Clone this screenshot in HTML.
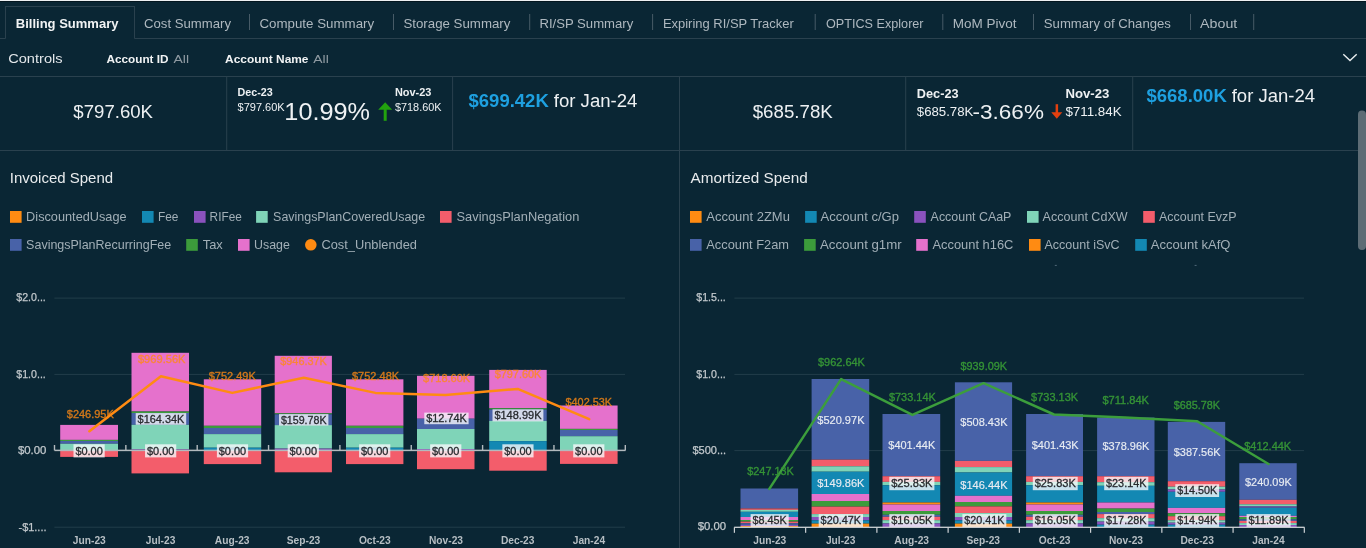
<!DOCTYPE html>
<html><head><meta charset="utf-8"><title>Billing Summary</title>
<style>
html,body{margin:0;padding:0;background:#0a2634;width:1366px;height:548px;overflow:hidden}
svg{display:block;font-family:"Liberation Sans", sans-serif;will-change:transform}
</style></head><body>
<svg width="1366" height="548" viewBox="0 0 1366 548">
<rect x="0.00" y="0.00" width="1366.00" height="1.00" fill="#eef0f2"/>
<rect x="0.00" y="1.00" width="1366.00" height="1.00" fill="#04161f"/>
<text x="15.81" y="28.00" font-size="13" fill="#f1f3f4" font-weight="bold" textLength="102.67" lengthAdjust="spacingAndGlyphs">Billing Summary</text>
<text x="144.01" y="28.00" font-size="13" fill="#aeb8bf" font-weight="normal" textLength="86.97" lengthAdjust="spacingAndGlyphs">Cost Summary</text>
<text x="259.42" y="28.00" font-size="13" fill="#aeb8bf" font-weight="normal" textLength="114.77" lengthAdjust="spacingAndGlyphs">Compute Summary</text>
<text x="403.42" y="28.00" font-size="13" fill="#aeb8bf" font-weight="normal" textLength="106.97" lengthAdjust="spacingAndGlyphs">Storage Summary</text>
<text x="539.41" y="28.00" font-size="13" fill="#aeb8bf" font-weight="normal" textLength="93.87" lengthAdjust="spacingAndGlyphs">RI/SP Summary</text>
<text x="662.91" y="28.00" font-size="13" fill="#aeb8bf" font-weight="normal" textLength="130.87" lengthAdjust="spacingAndGlyphs">Expiring RI/SP Tracker</text>
<text x="826.01" y="28.00" font-size="13" fill="#aeb8bf" font-weight="normal" textLength="97.57" lengthAdjust="spacingAndGlyphs">OPTICS Explorer</text>
<text x="952.71" y="28.00" font-size="13" fill="#aeb8bf" font-weight="normal" textLength="63.87" lengthAdjust="spacingAndGlyphs">MoM Pivot</text>
<text x="1043.82" y="28.00" font-size="13" fill="#aeb8bf" font-weight="normal" textLength="127.07" lengthAdjust="spacingAndGlyphs">Summary of Changes</text>
<text x="1200.12" y="28.00" font-size="13" fill="#aeb8bf" font-weight="normal" textLength="37.17" lengthAdjust="spacingAndGlyphs">About</text>
<rect x="249.00" y="14.00" width="1" height="16.00" fill="#475b67"/>
<rect x="393.00" y="14.00" width="1" height="16.00" fill="#475b67"/>
<rect x="529.20" y="14.00" width="1" height="16.00" fill="#475b67"/>
<rect x="652.10" y="14.00" width="1" height="16.00" fill="#475b67"/>
<rect x="814.70" y="14.00" width="1" height="16.00" fill="#475b67"/>
<rect x="942.30" y="14.00" width="1" height="16.00" fill="#475b67"/>
<rect x="1033.00" y="14.00" width="1" height="16.00" fill="#475b67"/>
<rect x="1190.00" y="14.00" width="1" height="16.00" fill="#475b67"/>
<rect x="1253.20" y="14.00" width="1" height="16.00" fill="#475b67"/>
<rect x="5.00" y="6.00" width="1" height="32.50" fill="#2a414e"/>
<rect x="5.00" y="6.00" width="129.50" height="1" fill="#2a414e"/>
<rect x="134.00" y="6.00" width="1" height="32.50" fill="#2a414e"/>
<rect x="0.00" y="38.00" width="5.50" height="1" fill="#2a414e"/>
<rect x="134.50" y="38.00" width="1231.50" height="1" fill="#2a414e"/>
<text x="8.19" y="63.00" font-size="13.5" fill="#e3e7ea" font-weight="normal" textLength="54.42" lengthAdjust="spacingAndGlyphs">Controls</text>
<text x="106.50" y="62.70" font-size="11" fill="#f1f3f4" font-weight="bold" textLength="61.99" lengthAdjust="spacingAndGlyphs">Account ID</text>
<text x="173.50" y="62.70" font-size="11" fill="#8f9aa2" font-weight="normal" textLength="15.59" lengthAdjust="spacingAndGlyphs">All</text>
<text x="225.10" y="62.70" font-size="11" fill="#f1f3f4" font-weight="bold" textLength="83.39" lengthAdjust="spacingAndGlyphs">Account Name</text>
<text x="313.31" y="62.70" font-size="11" fill="#8f9aa2" font-weight="normal" textLength="15.49" lengthAdjust="spacingAndGlyphs">All</text>
<polyline points="1343.3,54.2 1350,60.6 1356.7,54.2" fill="none" stroke="#e8ecee" stroke-width="1.4"/>
<rect x="0.00" y="76.00" width="1366.00" height="1" fill="#2a414e"/>
<rect x="226.20" y="76.50" width="1" height="74.00" fill="#2a414e"/>
<rect x="452.10" y="76.50" width="1" height="74.00" fill="#2a414e"/>
<rect x="679.00" y="76.50" width="1" height="74.00" fill="#2a414e"/>
<rect x="905.20" y="76.50" width="1" height="74.00" fill="#2a414e"/>
<rect x="1132.20" y="76.50" width="1" height="74.00" fill="#2a414e"/>
<rect x="0.00" y="150.00" width="1358.00" height="1" fill="#2a414e"/>
<text x="73.39" y="117.80" font-size="18" fill="#eef1f3" font-weight="normal" textLength="79.62" lengthAdjust="spacingAndGlyphs">$797.60K</text>
<text x="237.53" y="95.60" font-size="10.5" fill="#eef1f3" font-weight="bold" textLength="35.25" lengthAdjust="spacingAndGlyphs">Dec-23</text>
<text x="237.53" y="110.80" font-size="10.5" fill="#eef1f3" font-weight="normal" textLength="47.14" lengthAdjust="spacingAndGlyphs">$797.60K</text>
<text x="284.36" y="120.10" font-size="23" fill="#eef1f3" font-weight="normal" textLength="85.67" lengthAdjust="spacingAndGlyphs">10.99%</text>
<text x="394.93" y="95.60" font-size="10.5" fill="#eef1f3" font-weight="bold" textLength="36.45" lengthAdjust="spacingAndGlyphs">Nov-23</text>
<text x="394.93" y="110.80" font-size="10.5" fill="#eef1f3" font-weight="normal" textLength="46.65" lengthAdjust="spacingAndGlyphs">$718.60K</text>
<path d="M385.2,102.3 L392.2,109.7 L378.2,109.7 Z" fill="#22a20e"/>
<rect x="383.70" y="109.00" width="3.00" height="11.80" fill="#22a20e"/>
<text x="468.49" y="107.30" font-size="18" fill="#1ea0e0" font-weight="bold" textLength="80.32" lengthAdjust="spacingAndGlyphs">$699.42K</text>
<text x="553.79" y="107.30" font-size="18" fill="#eef1f3" font-weight="normal" textLength="83.62" lengthAdjust="spacingAndGlyphs">for Jan-24</text>
<text x="752.69" y="118.20" font-size="18" fill="#eef1f3" font-weight="normal" textLength="80.12" lengthAdjust="spacingAndGlyphs">$685.78K</text>
<text x="916.86" y="97.70" font-size="12" fill="#eef1f3" font-weight="bold" textLength="41.68" lengthAdjust="spacingAndGlyphs">Dec-23</text>
<text x="916.81" y="115.70" font-size="13" fill="#eef1f3" font-weight="normal" textLength="56.57" lengthAdjust="spacingAndGlyphs">$685.78K</text>
<text x="972.60" y="118.70" font-size="20" fill="#eef1f3" font-weight="normal" textLength="71.30" lengthAdjust="spacingAndGlyphs">-3.66%</text>
<text x="1065.46" y="97.70" font-size="12" fill="#eef1f3" font-weight="bold" textLength="43.88" lengthAdjust="spacingAndGlyphs">Nov-23</text>
<text x="1065.41" y="115.70" font-size="13" fill="#eef1f3" font-weight="normal" textLength="56.17" lengthAdjust="spacingAndGlyphs">$711.84K</text>
<path d="M1056.8,118.8 L1062.3,112.2 L1051.3,112.2 Z" fill="#e2400f"/>
<rect x="1055.60" y="104.20" width="2.50" height="8.80" fill="#e2400f"/>
<text x="1146.41" y="102.40" font-size="17.5" fill="#1ea0e0" font-weight="bold" textLength="80.37" lengthAdjust="spacingAndGlyphs">$668.00K</text>
<text x="1231.71" y="102.40" font-size="17.5" fill="#eef1f3" font-weight="normal" textLength="83.37" lengthAdjust="spacingAndGlyphs">for Jan-24</text>
<rect x="1358" y="110.4" width="8" height="139.6" rx="4" fill="#5d6c75"/>
<rect x="679.00" y="150.50" width="1" height="397.50" fill="#2a414e"/>
<text x="9.72" y="183.10" font-size="15" fill="#e8ebed" font-weight="normal" textLength="103.35" lengthAdjust="spacingAndGlyphs">Invoiced Spend</text>
<text x="690.53" y="183.20" font-size="15" fill="#e8ebed" font-weight="normal" textLength="117.35" lengthAdjust="spacingAndGlyphs">Amortized Spend</text>
<rect x="10.00" y="211.00" width="11.60" height="11.80" fill="#ff8b12"/>
<text x="26.11" y="221.20" font-size="13" fill="#a2afb7" font-weight="normal" textLength="100.47" lengthAdjust="spacingAndGlyphs">DiscountedUsage</text>
<rect x="142.00" y="211.00" width="11.60" height="11.80" fill="#1388b3"/>
<text x="157.91" y="221.20" font-size="13" fill="#a2afb7" font-weight="normal" textLength="20.47" lengthAdjust="spacingAndGlyphs">Fee</text>
<rect x="194.00" y="211.00" width="11.60" height="11.80" fill="#8a52bd"/>
<text x="209.61" y="221.20" font-size="13" fill="#a2afb7" font-weight="normal" textLength="32.17" lengthAdjust="spacingAndGlyphs">RIFee</text>
<rect x="256.10" y="211.00" width="11.60" height="11.80" fill="#7fd4b8"/>
<text x="273.12" y="221.20" font-size="13" fill="#a2afb7" font-weight="normal" textLength="152.07" lengthAdjust="spacingAndGlyphs">SavingsPlanCoveredUsage</text>
<rect x="440.00" y="211.00" width="11.60" height="11.80" fill="#f35d6b"/>
<text x="456.52" y="221.20" font-size="13" fill="#a2afb7" font-weight="normal" textLength="122.77" lengthAdjust="spacingAndGlyphs">SavingsPlanNegation</text>
<rect x="10.00" y="239.00" width="11.60" height="11.80" fill="#4862a8"/>
<text x="26.11" y="249.20" font-size="13" fill="#a2afb7" font-weight="normal" textLength="145.07" lengthAdjust="spacingAndGlyphs">SavingsPlanRecurringFee</text>
<rect x="186.20" y="239.00" width="11.60" height="11.80" fill="#3c9b3b"/>
<text x="202.81" y="249.20" font-size="13" fill="#a2afb7" font-weight="normal" textLength="19.97" lengthAdjust="spacingAndGlyphs">Tax</text>
<rect x="238.00" y="239.00" width="11.60" height="11.80" fill="#e571cc"/>
<text x="254.11" y="249.20" font-size="13" fill="#a2afb7" font-weight="normal" textLength="35.77" lengthAdjust="spacingAndGlyphs">Usage</text>
<circle cx="310.80" cy="244.80" r="5.8" fill="#ff8b12"/>
<text x="321.42" y="249.20" font-size="13" fill="#a2afb7" font-weight="normal" textLength="95.57" lengthAdjust="spacingAndGlyphs">Cost_Unblended</text>
<rect x="690.00" y="211.00" width="11.60" height="11.80" fill="#ff8b12"/>
<text x="706.31" y="221.20" font-size="13" fill="#a2afb7" font-weight="normal" textLength="83.57" lengthAdjust="spacingAndGlyphs">Account 2ZMu</text>
<rect x="805.10" y="211.00" width="11.60" height="11.80" fill="#1388b3"/>
<text x="820.51" y="221.20" font-size="13" fill="#a2afb7" font-weight="normal" textLength="78.57" lengthAdjust="spacingAndGlyphs">Account c/Gp</text>
<rect x="914.20" y="211.00" width="11.60" height="11.80" fill="#8a52bd"/>
<text x="930.62" y="221.20" font-size="13" fill="#a2afb7" font-weight="normal" textLength="80.77" lengthAdjust="spacingAndGlyphs">Account CAaP</text>
<rect x="1027.00" y="211.00" width="11.60" height="11.80" fill="#7fd4b8"/>
<text x="1042.62" y="221.20" font-size="13" fill="#a2afb7" font-weight="normal" textLength="84.97" lengthAdjust="spacingAndGlyphs">Account CdXW</text>
<rect x="1143.20" y="211.00" width="11.60" height="11.80" fill="#f35d6b"/>
<text x="1159.01" y="221.20" font-size="13" fill="#a2afb7" font-weight="normal" textLength="77.57" lengthAdjust="spacingAndGlyphs">Account EvzP</text>
<rect x="690.00" y="239.00" width="11.60" height="11.80" fill="#4862a8"/>
<text x="706.31" y="249.20" font-size="13" fill="#a2afb7" font-weight="normal" textLength="82.67" lengthAdjust="spacingAndGlyphs">Account F2am</text>
<rect x="804.10" y="239.00" width="11.60" height="11.80" fill="#3c9b3b"/>
<text x="820.01" y="249.20" font-size="13" fill="#a2afb7" font-weight="normal" textLength="81.67" lengthAdjust="spacingAndGlyphs">Account g1mr</text>
<rect x="916.20" y="239.00" width="11.60" height="11.80" fill="#e571cc"/>
<text x="932.51" y="249.20" font-size="13" fill="#a2afb7" font-weight="normal" textLength="80.87" lengthAdjust="spacingAndGlyphs">Account h16C</text>
<rect x="1029.00" y="239.00" width="11.60" height="11.80" fill="#ff8b12"/>
<text x="1044.51" y="249.20" font-size="13" fill="#a2afb7" font-weight="normal" textLength="75.07" lengthAdjust="spacingAndGlyphs">Account iSvC</text>
<rect x="1135.20" y="239.00" width="11.60" height="11.80" fill="#1388b3"/>
<text x="1150.82" y="249.20" font-size="13" fill="#a2afb7" font-weight="normal" textLength="79.57" lengthAdjust="spacingAndGlyphs">Account kAfQ</text>
<rect x="1054.80" y="264.90" width="2.00" height="1.00" fill="#4f6878"/>
<rect x="1194.60" y="264.90" width="2.00" height="1.00" fill="#4f6878"/>
<rect x="54.40" y="297.60" width="570.60" height="1" fill="#223e4a"/>
<rect x="54.40" y="373.90" width="570.60" height="1" fill="#223e4a"/>
<rect x="54.40" y="526.70" width="570.60" height="1" fill="#223e4a"/>
<text x="16.30" y="301.00" font-size="11" fill="#c3c9cd" font-weight="normal" textLength="29.49" lengthAdjust="spacingAndGlyphs" stroke="#c3c9cd" stroke-width="0.25">$2.0...</text>
<text x="16.30" y="377.50" font-size="11" fill="#c3c9cd" font-weight="normal" textLength="29.49" lengthAdjust="spacingAndGlyphs" stroke="#c3c9cd" stroke-width="0.25">$1.0...</text>
<text x="17.90" y="454.00" font-size="11" fill="#c3c9cd" font-weight="normal" textLength="28.59" lengthAdjust="spacingAndGlyphs" stroke="#c3c9cd" stroke-width="0.25">$0.00</text>
<text x="18.50" y="530.50" font-size="11" fill="#c3c9cd" font-weight="normal" textLength="27.99" lengthAdjust="spacingAndGlyphs" stroke="#c3c9cd" stroke-width="0.25">-$1....</text>
<rect x="734.40" y="297.60" width="569.60" height="1" fill="#223e4a"/>
<rect x="734.40" y="373.90" width="569.60" height="1" fill="#223e4a"/>
<rect x="734.40" y="450.10" width="569.60" height="1" fill="#223e4a"/>
<text x="696.30" y="301.00" font-size="11" fill="#c3c9cd" font-weight="normal" textLength="29.49" lengthAdjust="spacingAndGlyphs" stroke="#c3c9cd" stroke-width="0.25">$1.5...</text>
<text x="696.30" y="377.50" font-size="11" fill="#c3c9cd" font-weight="normal" textLength="29.49" lengthAdjust="spacingAndGlyphs" stroke="#c3c9cd" stroke-width="0.25">$1.0...</text>
<text x="692.40" y="454.00" font-size="11" fill="#c3c9cd" font-weight="normal" textLength="33.69" lengthAdjust="spacingAndGlyphs" stroke="#c3c9cd" stroke-width="0.25">$500...</text>
<text x="697.71" y="529.80" font-size="11" fill="#c3c9cd" font-weight="normal" textLength="28.39" lengthAdjust="spacingAndGlyphs" stroke="#c3c9cd" stroke-width="0.25">$0.00</text>
<rect x="60.20" y="424.90" width="57.80" height="15.00" fill="#e571cc"/>
<rect x="60.20" y="439.90" width="57.80" height="1.10" fill="#3c9b3b"/>
<rect x="60.20" y="441.00" width="57.80" height="2.70" fill="#4862a8"/>
<rect x="60.20" y="443.70" width="57.80" height="6.40" fill="#7fd4b8"/>
<rect x="60.20" y="450.10" width="57.80" height="6.80" fill="#f35d6b"/>
<rect x="131.50" y="352.80" width="57.50" height="58.70" fill="#e571cc"/>
<rect x="131.50" y="411.50" width="57.50" height="1.50" fill="#3c9b3b"/>
<rect x="131.50" y="413.00" width="57.50" height="11.80" fill="#4862a8"/>
<rect x="131.50" y="424.80" width="57.50" height="24.50" fill="#7fd4b8"/>
<rect x="131.50" y="449.30" width="57.50" height="1.50" fill="#8a52bd"/>
<rect x="131.50" y="450.80" width="57.50" height="22.60" fill="#f35d6b"/>
<rect x="203.80" y="379.30" width="57.40" height="46.50" fill="#e571cc"/>
<rect x="203.80" y="425.80" width="57.40" height="2.20" fill="#3c9b3b"/>
<rect x="203.80" y="428.00" width="57.40" height="6.10" fill="#4862a8"/>
<rect x="203.80" y="434.10" width="57.40" height="13.60" fill="#7fd4b8"/>
<rect x="203.80" y="447.70" width="57.40" height="2.30" fill="#1388b3"/>
<rect x="203.80" y="450.00" width="57.40" height="14.10" fill="#f35d6b"/>
<rect x="274.70" y="355.80" width="57.20" height="57.50" fill="#e571cc"/>
<rect x="274.70" y="413.30" width="57.20" height="1.00" fill="#3c9b3b"/>
<rect x="274.70" y="414.30" width="57.20" height="10.80" fill="#4862a8"/>
<rect x="274.70" y="425.10" width="57.20" height="23.50" fill="#7fd4b8"/>
<rect x="274.70" y="448.60" width="57.20" height="1.90" fill="#8a52bd"/>
<rect x="274.70" y="450.50" width="57.20" height="21.80" fill="#f35d6b"/>
<rect x="346.00" y="379.30" width="57.40" height="46.50" fill="#e571cc"/>
<rect x="346.00" y="425.80" width="57.40" height="2.20" fill="#3c9b3b"/>
<rect x="346.00" y="428.00" width="57.40" height="6.10" fill="#4862a8"/>
<rect x="346.00" y="434.10" width="57.40" height="13.60" fill="#7fd4b8"/>
<rect x="346.00" y="447.70" width="57.40" height="2.30" fill="#1388b3"/>
<rect x="346.00" y="450.00" width="57.40" height="14.10" fill="#f35d6b"/>
<rect x="417.00" y="375.80" width="57.50" height="42.90" fill="#e571cc"/>
<rect x="417.00" y="418.70" width="57.50" height="10.30" fill="#4862a8"/>
<rect x="417.00" y="429.00" width="57.50" height="20.00" fill="#7fd4b8"/>
<rect x="417.00" y="449.00" width="57.50" height="1.50" fill="#8a52bd"/>
<rect x="417.00" y="450.50" width="57.50" height="18.70" fill="#f35d6b"/>
<rect x="489.20" y="369.90" width="57.50" height="38.30" fill="#e571cc"/>
<rect x="489.20" y="408.20" width="57.50" height="1.30" fill="#3c9b3b"/>
<rect x="489.20" y="409.50" width="57.50" height="11.40" fill="#4862a8"/>
<rect x="489.20" y="420.90" width="57.50" height="20.20" fill="#7fd4b8"/>
<rect x="489.20" y="441.10" width="57.50" height="8.90" fill="#1388b3"/>
<rect x="489.20" y="450.00" width="57.50" height="20.70" fill="#f35d6b"/>
<rect x="560.00" y="405.50" width="57.60" height="23.40" fill="#e571cc"/>
<rect x="560.00" y="428.90" width="57.60" height="1.10" fill="#3c9b3b"/>
<rect x="560.00" y="430.00" width="57.60" height="6.20" fill="#4862a8"/>
<rect x="560.00" y="436.20" width="57.60" height="13.80" fill="#7fd4b8"/>
<rect x="560.00" y="450.00" width="57.60" height="13.90" fill="#f35d6b"/>
<rect x="54.50" y="449.65" width="571.00" height="1.5" fill="#b3babe"/>
<rect x="53.80" y="445.00" width="1.4" height="5.40" fill="#b3babe"/>
<rect x="125.15" y="445.00" width="1.4" height="5.40" fill="#b3babe"/>
<rect x="196.50" y="445.00" width="1.4" height="5.40" fill="#b3babe"/>
<rect x="267.85" y="445.00" width="1.4" height="5.40" fill="#b3babe"/>
<rect x="339.20" y="445.00" width="1.4" height="5.40" fill="#b3babe"/>
<rect x="410.55" y="445.00" width="1.4" height="5.40" fill="#b3babe"/>
<rect x="481.90" y="445.00" width="1.4" height="5.40" fill="#b3babe"/>
<rect x="553.25" y="445.00" width="1.4" height="5.40" fill="#b3babe"/>
<rect x="624.60" y="445.00" width="1.4" height="5.40" fill="#b3babe"/>
<polyline points="89.4,431.3 160.9,376.3 232.3,392.9 303.8,377.8 375.5,392.9 445.5,395.1 517.7,388.9 589.2,419.2" fill="none" stroke="#ff8b12" stroke-width="2.5" stroke-linejoin="round" stroke-linecap="round"/>
<rect x="73.50" y="444.30" width="31.20" height="13.10" fill="rgba(246,248,250,0.8)"/>
<text x="75.38" y="454.65" font-size="11.5" fill="#26292d" font-weight="normal" textLength="27.43" lengthAdjust="spacingAndGlyphs" stroke="#26292d" stroke-width="0.3">$0.00</text>
<rect x="145.05" y="444.30" width="31.20" height="13.10" fill="rgba(246,248,250,0.8)"/>
<text x="146.93" y="454.65" font-size="11.5" fill="#26292d" font-weight="normal" textLength="27.43" lengthAdjust="spacingAndGlyphs" stroke="#26292d" stroke-width="0.3">$0.00</text>
<rect x="216.90" y="444.30" width="31.20" height="13.10" fill="rgba(246,248,250,0.8)"/>
<text x="218.78" y="454.65" font-size="11.5" fill="#26292d" font-weight="normal" textLength="27.43" lengthAdjust="spacingAndGlyphs" stroke="#26292d" stroke-width="0.3">$0.00</text>
<rect x="287.70" y="444.30" width="31.20" height="13.10" fill="rgba(246,248,250,0.8)"/>
<text x="289.58" y="454.65" font-size="11.5" fill="#26292d" font-weight="normal" textLength="27.44" lengthAdjust="spacingAndGlyphs" stroke="#26292d" stroke-width="0.3">$0.00</text>
<rect x="359.10" y="444.30" width="31.20" height="13.10" fill="rgba(246,248,250,0.8)"/>
<text x="360.98" y="454.65" font-size="11.5" fill="#26292d" font-weight="normal" textLength="27.44" lengthAdjust="spacingAndGlyphs" stroke="#26292d" stroke-width="0.3">$0.00</text>
<rect x="430.15" y="444.30" width="31.20" height="13.10" fill="rgba(246,248,250,0.8)"/>
<text x="432.03" y="454.65" font-size="11.5" fill="#26292d" font-weight="normal" textLength="27.44" lengthAdjust="spacingAndGlyphs" stroke="#26292d" stroke-width="0.3">$0.00</text>
<rect x="502.35" y="444.30" width="31.20" height="13.10" fill="rgba(246,248,250,0.8)"/>
<text x="504.23" y="454.65" font-size="11.5" fill="#26292d" font-weight="normal" textLength="27.44" lengthAdjust="spacingAndGlyphs" stroke="#26292d" stroke-width="0.3">$0.00</text>
<rect x="573.20" y="444.30" width="31.20" height="13.10" fill="rgba(246,248,250,0.8)"/>
<text x="575.08" y="454.65" font-size="11.5" fill="#26292d" font-weight="normal" textLength="27.44" lengthAdjust="spacingAndGlyphs" stroke="#26292d" stroke-width="0.3">$0.00</text>
<rect x="135.70" y="413.10" width="50.50" height="11.70" fill="rgba(246,248,250,0.8)"/>
<text x="137.58" y="422.75" font-size="11.5" fill="#26292d" font-weight="normal" textLength="46.73" lengthAdjust="spacingAndGlyphs" stroke="#26292d" stroke-width="0.3">$164.34K</text>
<rect x="279.00" y="414.10" width="49.40" height="11.50" fill="rgba(246,248,250,0.8)"/>
<text x="280.88" y="423.65" font-size="11.5" fill="#26292d" font-weight="normal" textLength="45.64" lengthAdjust="spacingAndGlyphs" stroke="#26292d" stroke-width="0.3">$159.78K</text>
<rect x="424.30" y="412.60" width="44.30" height="11.60" fill="rgba(246,248,250,0.8)"/>
<text x="426.18" y="422.20" font-size="11.5" fill="#26292d" font-weight="normal" textLength="40.54" lengthAdjust="spacingAndGlyphs" stroke="#26292d" stroke-width="0.3">$12.74K</text>
<rect x="492.50" y="409.30" width="50.90" height="12.10" fill="rgba(246,248,250,0.8)"/>
<text x="494.38" y="419.15" font-size="11.5" fill="#26292d" font-weight="normal" textLength="47.14" lengthAdjust="spacingAndGlyphs" stroke="#26292d" stroke-width="0.3">$148.99K</text>
<text x="66.80" y="417.90" font-size="11" fill="#ff8a14" font-weight="normal" textLength="46.99" lengthAdjust="spacingAndGlyphs" stroke="#ff8a14" stroke-width="0.35" opacity="0.82">$246.95K</text>
<text x="137.91" y="363.00" font-size="11" fill="#ff8a14" font-weight="normal" textLength="47.59" lengthAdjust="spacingAndGlyphs" stroke="#ff8a14" stroke-width="0.35" opacity="0.82">$969.56K</text>
<text x="208.70" y="380.00" font-size="11" fill="#ff8a14" font-weight="normal" textLength="47.09" lengthAdjust="spacingAndGlyphs" stroke="#ff8a14" stroke-width="0.35" opacity="0.82">$752.49K</text>
<text x="280.31" y="365.00" font-size="11" fill="#ff8a14" font-weight="normal" textLength="46.49" lengthAdjust="spacingAndGlyphs" stroke="#ff8a14" stroke-width="0.35" opacity="0.82">$946.37K</text>
<text x="352.00" y="380.00" font-size="11" fill="#ff8a14" font-weight="normal" textLength="47.09" lengthAdjust="spacingAndGlyphs" stroke="#ff8a14" stroke-width="0.35" opacity="0.82">$752.48K</text>
<text x="423.11" y="382.00" font-size="11" fill="#ff8a14" font-weight="normal" textLength="47.09" lengthAdjust="spacingAndGlyphs" stroke="#ff8a14" stroke-width="0.35" opacity="0.82">$718.60K</text>
<text x="494.70" y="378.00" font-size="11" fill="#ff8a14" font-weight="normal" textLength="46.59" lengthAdjust="spacingAndGlyphs" stroke="#ff8a14" stroke-width="0.35" opacity="0.82">$797.60K</text>
<text x="565.50" y="405.50" font-size="11" fill="#ff8a14" font-weight="normal" textLength="46.59" lengthAdjust="spacingAndGlyphs" stroke="#ff8a14" stroke-width="0.35" opacity="0.82">$402.53K</text>
<text x="89.30" y="544.2" font-size="11" font-weight="bold" fill="#b6bec3" text-anchor="middle" textLength="32.99" lengthAdjust="spacingAndGlyphs">Jun-23</text>
<text x="769.80" y="544.2" font-size="11" font-weight="bold" fill="#b6bec3" text-anchor="middle" textLength="32.99" lengthAdjust="spacingAndGlyphs">Jun-23</text>
<text x="160.60" y="544.2" font-size="11" font-weight="bold" fill="#b6bec3" text-anchor="middle" textLength="29.57" lengthAdjust="spacingAndGlyphs">Jul-23</text>
<text x="840.70" y="544.2" font-size="11" font-weight="bold" fill="#b6bec3" text-anchor="middle" textLength="29.57" lengthAdjust="spacingAndGlyphs">Jul-23</text>
<text x="232.20" y="544.2" font-size="11" font-weight="bold" fill="#b6bec3" text-anchor="middle" textLength="34.67" lengthAdjust="spacingAndGlyphs">Aug-23</text>
<text x="911.70" y="544.2" font-size="11" font-weight="bold" fill="#b6bec3" text-anchor="middle" textLength="34.67" lengthAdjust="spacingAndGlyphs">Aug-23</text>
<text x="303.50" y="544.2" font-size="11" font-weight="bold" fill="#b6bec3" text-anchor="middle" textLength="33.55" lengthAdjust="spacingAndGlyphs">Sep-23</text>
<text x="983.30" y="544.2" font-size="11" font-weight="bold" fill="#b6bec3" text-anchor="middle" textLength="33.55" lengthAdjust="spacingAndGlyphs">Sep-23</text>
<text x="374.80" y="544.2" font-size="11" font-weight="bold" fill="#b6bec3" text-anchor="middle" textLength="31.85" lengthAdjust="spacingAndGlyphs">Oct-23</text>
<text x="1054.60" y="544.2" font-size="11" font-weight="bold" fill="#b6bec3" text-anchor="middle" textLength="31.85" lengthAdjust="spacingAndGlyphs">Oct-23</text>
<text x="446.00" y="544.2" font-size="11" font-weight="bold" fill="#b6bec3" text-anchor="middle" textLength="34.12" lengthAdjust="spacingAndGlyphs">Nov-23</text>
<text x="1126.00" y="544.2" font-size="11" font-weight="bold" fill="#b6bec3" text-anchor="middle" textLength="34.12" lengthAdjust="spacingAndGlyphs">Nov-23</text>
<text x="517.70" y="544.2" font-size="11" font-weight="bold" fill="#b6bec3" text-anchor="middle" textLength="33.55" lengthAdjust="spacingAndGlyphs">Dec-23</text>
<text x="1197.20" y="544.2" font-size="11" font-weight="bold" fill="#b6bec3" text-anchor="middle" textLength="33.55" lengthAdjust="spacingAndGlyphs">Dec-23</text>
<text x="588.90" y="544.2" font-size="11" font-weight="bold" fill="#b6bec3" text-anchor="middle" textLength="32.42" lengthAdjust="spacingAndGlyphs">Jan-24</text>
<text x="1268.40" y="544.2" font-size="11" font-weight="bold" fill="#b6bec3" text-anchor="middle" textLength="32.42" lengthAdjust="spacingAndGlyphs">Jan-24</text>
<rect x="740.50" y="488.50" width="57.60" height="20.00" fill="#4862a8"/>
<rect x="740.50" y="508.50" width="57.60" height="1.40" fill="#f35d6b"/>
<rect x="740.50" y="509.90" width="57.60" height="1.90" fill="#7fd4b8"/>
<rect x="740.50" y="511.80" width="57.60" height="5.20" fill="#1388b3"/>
<rect x="740.50" y="517.00" width="57.60" height="3.00" fill="#e571cc"/>
<rect x="740.50" y="520.00" width="57.60" height="1.60" fill="#3c9b3b"/>
<rect x="740.50" y="521.60" width="57.60" height="1.70" fill="#f35d6b"/>
<rect x="740.50" y="523.30" width="57.60" height="1.60" fill="#4862a8"/>
<rect x="740.50" y="524.90" width="57.60" height="1.10" fill="#8a52bd"/>
<rect x="740.50" y="526.00" width="57.60" height="1.20" fill="#ff8b12"/>
<rect x="811.60" y="379.00" width="57.60" height="80.60" fill="#4862a8"/>
<rect x="811.60" y="459.60" width="57.60" height="6.70" fill="#f35d6b"/>
<rect x="811.60" y="466.30" width="57.60" height="5.40" fill="#7fd4b8"/>
<rect x="811.60" y="471.70" width="57.60" height="22.30" fill="#1388b3"/>
<rect x="811.60" y="494.00" width="57.60" height="7.00" fill="#e571cc"/>
<rect x="811.60" y="501.00" width="57.60" height="5.60" fill="#3c9b3b"/>
<rect x="811.60" y="506.60" width="57.60" height="7.50" fill="#f35d6b"/>
<rect x="811.60" y="514.10" width="57.60" height="2.90" fill="#7fd4b8"/>
<rect x="811.60" y="517.00" width="57.60" height="3.30" fill="#8a52bd"/>
<rect x="811.60" y="520.30" width="57.60" height="3.30" fill="#1388b3"/>
<rect x="811.60" y="523.60" width="57.60" height="3.60" fill="#ff8b12"/>
<rect x="882.50" y="414.00" width="57.70" height="62.20" fill="#4862a8"/>
<rect x="882.50" y="476.20" width="57.70" height="5.70" fill="#f35d6b"/>
<rect x="882.50" y="481.90" width="57.70" height="3.40" fill="#7fd4b8"/>
<rect x="882.50" y="485.30" width="57.70" height="17.20" fill="#1388b3"/>
<rect x="882.50" y="502.50" width="57.70" height="2.00" fill="#ff8b12"/>
<rect x="882.50" y="504.50" width="57.70" height="6.50" fill="#e571cc"/>
<rect x="882.50" y="511.00" width="57.70" height="3.80" fill="#3c9b3b"/>
<rect x="882.50" y="514.80" width="57.70" height="2.00" fill="#4862a8"/>
<rect x="882.50" y="516.80" width="57.70" height="3.40" fill="#f35d6b"/>
<rect x="882.50" y="520.20" width="57.70" height="3.20" fill="#7fd4b8"/>
<rect x="882.50" y="523.40" width="57.70" height="3.80" fill="#8a52bd"/>
<rect x="954.90" y="382.30" width="57.20" height="78.60" fill="#4862a8"/>
<rect x="954.90" y="460.90" width="57.20" height="6.20" fill="#f35d6b"/>
<rect x="954.90" y="467.10" width="57.20" height="5.40" fill="#7fd4b8"/>
<rect x="954.90" y="472.50" width="57.20" height="23.30" fill="#1388b3"/>
<rect x="954.90" y="495.80" width="57.20" height="6.20" fill="#e571cc"/>
<rect x="954.90" y="502.00" width="57.20" height="4.40" fill="#3c9b3b"/>
<rect x="954.90" y="506.40" width="57.20" height="6.60" fill="#f35d6b"/>
<rect x="954.90" y="513.00" width="57.20" height="4.00" fill="#7fd4b8"/>
<rect x="954.90" y="517.00" width="57.20" height="3.30" fill="#8a52bd"/>
<rect x="954.90" y="520.30" width="57.20" height="3.30" fill="#1388b3"/>
<rect x="954.90" y="523.60" width="57.20" height="3.60" fill="#ff8b12"/>
<rect x="1026.10" y="414.00" width="56.90" height="62.20" fill="#4862a8"/>
<rect x="1026.10" y="476.20" width="56.90" height="5.70" fill="#f35d6b"/>
<rect x="1026.10" y="481.90" width="56.90" height="3.40" fill="#7fd4b8"/>
<rect x="1026.10" y="485.30" width="56.90" height="17.20" fill="#1388b3"/>
<rect x="1026.10" y="502.50" width="56.90" height="2.00" fill="#ff8b12"/>
<rect x="1026.10" y="504.50" width="56.90" height="6.50" fill="#e571cc"/>
<rect x="1026.10" y="511.00" width="56.90" height="3.80" fill="#3c9b3b"/>
<rect x="1026.10" y="514.80" width="56.90" height="2.00" fill="#4862a8"/>
<rect x="1026.10" y="516.80" width="56.90" height="3.40" fill="#f35d6b"/>
<rect x="1026.10" y="520.20" width="56.90" height="3.20" fill="#7fd4b8"/>
<rect x="1026.10" y="523.40" width="56.90" height="3.80" fill="#8a52bd"/>
<rect x="1097.10" y="417.50" width="57.40" height="58.70" fill="#4862a8"/>
<rect x="1097.10" y="476.20" width="57.40" height="6.00" fill="#f35d6b"/>
<rect x="1097.10" y="482.20" width="57.40" height="3.60" fill="#7fd4b8"/>
<rect x="1097.10" y="485.80" width="57.40" height="16.70" fill="#1388b3"/>
<rect x="1097.10" y="502.50" width="57.40" height="6.10" fill="#e571cc"/>
<rect x="1097.10" y="508.60" width="57.40" height="3.40" fill="#3c9b3b"/>
<rect x="1097.10" y="512.00" width="57.40" height="2.10" fill="#4862a8"/>
<rect x="1097.10" y="514.10" width="57.40" height="4.10" fill="#f35d6b"/>
<rect x="1097.10" y="518.20" width="57.40" height="3.40" fill="#7fd4b8"/>
<rect x="1097.10" y="521.60" width="57.40" height="3.10" fill="#8a52bd"/>
<rect x="1097.10" y="524.70" width="57.40" height="2.30" fill="#1388b3"/>
<rect x="1167.80" y="421.90" width="57.40" height="59.30" fill="#4862a8"/>
<rect x="1167.80" y="481.20" width="57.40" height="5.50" fill="#f35d6b"/>
<rect x="1167.80" y="486.70" width="57.40" height="2.80" fill="#7fd4b8"/>
<rect x="1167.80" y="489.50" width="57.40" height="2.30" fill="#8a52bd"/>
<rect x="1167.80" y="491.80" width="57.40" height="16.10" fill="#1388b3"/>
<rect x="1167.80" y="507.90" width="57.40" height="5.30" fill="#e571cc"/>
<rect x="1167.80" y="513.20" width="57.40" height="3.00" fill="#3c9b3b"/>
<rect x="1167.80" y="516.20" width="57.40" height="4.10" fill="#f35d6b"/>
<rect x="1167.80" y="520.30" width="57.40" height="2.40" fill="#7fd4b8"/>
<rect x="1167.80" y="522.70" width="57.40" height="2.00" fill="#8a52bd"/>
<rect x="1167.80" y="524.70" width="57.40" height="2.30" fill="#1388b3"/>
<rect x="1239.30" y="463.20" width="57.40" height="36.60" fill="#4862a8"/>
<rect x="1239.30" y="499.80" width="57.40" height="4.50" fill="#f35d6b"/>
<rect x="1239.30" y="504.30" width="57.40" height="2.10" fill="#7fd4b8"/>
<rect x="1239.30" y="506.40" width="57.40" height="1.30" fill="#8a52bd"/>
<rect x="1239.30" y="507.70" width="57.40" height="8.10" fill="#1388b3"/>
<rect x="1239.30" y="515.80" width="57.40" height="1.20" fill="#e571cc"/>
<rect x="1239.30" y="517.00" width="57.40" height="2.30" fill="#3c9b3b"/>
<rect x="1239.30" y="519.30" width="57.40" height="1.60" fill="#4862a8"/>
<rect x="1239.30" y="520.90" width="57.40" height="2.20" fill="#f35d6b"/>
<rect x="1239.30" y="523.10" width="57.40" height="1.90" fill="#7fd4b8"/>
<rect x="1239.30" y="525.00" width="57.40" height="2.20" fill="#8a52bd"/>
<rect x="734.20" y="526.65" width="570.30" height="1.3" fill="#cdd2d5"/>
<rect x="733.80" y="527.30" width="1.2" height="5.50" fill="#cdd2d5"/>
<rect x="805.04" y="527.30" width="1.2" height="5.50" fill="#cdd2d5"/>
<rect x="876.28" y="527.30" width="1.2" height="5.50" fill="#cdd2d5"/>
<rect x="947.52" y="527.30" width="1.2" height="5.50" fill="#cdd2d5"/>
<rect x="1018.76" y="527.30" width="1.2" height="5.50" fill="#cdd2d5"/>
<rect x="1090.00" y="527.30" width="1.2" height="5.50" fill="#cdd2d5"/>
<rect x="1161.24" y="527.30" width="1.2" height="5.50" fill="#cdd2d5"/>
<rect x="1232.48" y="527.30" width="1.2" height="5.50" fill="#cdd2d5"/>
<rect x="1303.72" y="527.30" width="1.2" height="5.50" fill="#cdd2d5"/>
<polyline points="769.3,488.9 841.1,379.1 912.4,414.9 983.6,383.2 1054,414.5 1125,417.5 1197.2,421.3 1268.5,464" fill="none" stroke="#3c9e3c" stroke-width="2.5" stroke-linejoin="round" stroke-linecap="round"/>
<text x="817.30" y="424.00" font-size="11" fill="#e8ecf2" font-weight="normal" textLength="47.19" lengthAdjust="spacingAndGlyphs" stroke="#e8ecf2" stroke-width="0.15">$520.97K</text>
<text x="888.30" y="449.20" font-size="11" fill="#e8ecf2" font-weight="normal" textLength="46.99" lengthAdjust="spacingAndGlyphs" stroke="#e8ecf2" stroke-width="0.15">$401.44K</text>
<text x="960.30" y="426.10" font-size="11" fill="#e8ecf2" font-weight="normal" textLength="47.19" lengthAdjust="spacingAndGlyphs" stroke="#e8ecf2" stroke-width="0.15">$508.43K</text>
<text x="1031.71" y="449.00" font-size="11" fill="#e8ecf2" font-weight="normal" textLength="46.99" lengthAdjust="spacingAndGlyphs" stroke="#e8ecf2" stroke-width="0.15">$401.43K</text>
<text x="1102.41" y="450.30" font-size="11" fill="#e8ecf2" font-weight="normal" textLength="46.99" lengthAdjust="spacingAndGlyphs" stroke="#e8ecf2" stroke-width="0.15">$378.96K</text>
<text x="1173.71" y="455.80" font-size="11" fill="#e8ecf2" font-weight="normal" textLength="46.89" lengthAdjust="spacingAndGlyphs" stroke="#e8ecf2" stroke-width="0.15">$387.56K</text>
<text x="1245.01" y="485.70" font-size="11" fill="#e8ecf2" font-weight="normal" textLength="46.79" lengthAdjust="spacingAndGlyphs" stroke="#e8ecf2" stroke-width="0.15">$240.09K</text>
<text x="817.21" y="487.00" font-size="11" fill="#e8ecf2" font-weight="normal" textLength="47.29" lengthAdjust="spacingAndGlyphs" stroke="#e8ecf2" stroke-width="0.15">$149.86K</text>
<text x="960.30" y="488.80" font-size="11" fill="#e8ecf2" font-weight="normal" textLength="47.29" lengthAdjust="spacingAndGlyphs" stroke="#e8ecf2" stroke-width="0.15">$146.44K</text>
<rect x="750.60" y="514.10" width="38.10" height="12.80" fill="rgba(246,248,250,0.8)"/>
<text x="752.48" y="524.30" font-size="11.5" fill="#26292d" font-weight="normal" textLength="34.34" lengthAdjust="spacingAndGlyphs" stroke="#26292d" stroke-width="0.3">$8.45K</text>
<rect x="818.70" y="514.10" width="44.30" height="12.80" fill="rgba(246,248,250,0.8)"/>
<text x="820.58" y="524.30" font-size="11.5" fill="#26292d" font-weight="normal" textLength="40.53" lengthAdjust="spacingAndGlyphs" stroke="#26292d" stroke-width="0.3">$20.47K</text>
<rect x="889.30" y="476.80" width="45.10" height="13.40" fill="rgba(246,248,250,0.8)"/>
<text x="891.18" y="487.30" font-size="11.5" fill="#26292d" font-weight="normal" textLength="41.34" lengthAdjust="spacingAndGlyphs" stroke="#26292d" stroke-width="0.3">$25.83K</text>
<rect x="889.30" y="514.10" width="45.10" height="12.80" fill="rgba(246,248,250,0.8)"/>
<text x="891.18" y="524.30" font-size="11.5" fill="#26292d" font-weight="normal" textLength="41.34" lengthAdjust="spacingAndGlyphs" stroke="#26292d" stroke-width="0.3">$16.05K</text>
<rect x="962.40" y="514.10" width="43.90" height="12.80" fill="rgba(246,248,250,0.8)"/>
<text x="964.28" y="524.30" font-size="11.5" fill="#26292d" font-weight="normal" textLength="40.14" lengthAdjust="spacingAndGlyphs" stroke="#26292d" stroke-width="0.3">$20.41K</text>
<rect x="1032.80" y="476.80" width="44.90" height="13.40" fill="rgba(246,248,250,0.8)"/>
<text x="1034.68" y="487.30" font-size="11.5" fill="#26292d" font-weight="normal" textLength="41.13" lengthAdjust="spacingAndGlyphs" stroke="#26292d" stroke-width="0.3">$25.83K</text>
<rect x="1032.80" y="514.10" width="44.90" height="12.80" fill="rgba(246,248,250,0.8)"/>
<text x="1034.68" y="524.30" font-size="11.5" fill="#26292d" font-weight="normal" textLength="41.13" lengthAdjust="spacingAndGlyphs" stroke="#26292d" stroke-width="0.3">$16.05K</text>
<rect x="1104.20" y="476.80" width="44.10" height="13.40" fill="rgba(246,248,250,0.8)"/>
<text x="1106.08" y="487.30" font-size="11.5" fill="#26292d" font-weight="normal" textLength="40.33" lengthAdjust="spacingAndGlyphs" stroke="#26292d" stroke-width="0.3">$23.14K</text>
<rect x="1104.20" y="514.10" width="44.10" height="12.80" fill="rgba(246,248,250,0.8)"/>
<text x="1106.08" y="524.30" font-size="11.5" fill="#26292d" font-weight="normal" textLength="40.33" lengthAdjust="spacingAndGlyphs" stroke="#26292d" stroke-width="0.3">$17.28K</text>
<rect x="1175.30" y="484.20" width="43.80" height="12.80" fill="rgba(246,248,250,0.8)"/>
<text x="1177.18" y="494.40" font-size="11.5" fill="#26292d" font-weight="normal" textLength="40.03" lengthAdjust="spacingAndGlyphs" stroke="#26292d" stroke-width="0.3">$14.50K</text>
<rect x="1175.30" y="514.10" width="43.80" height="12.80" fill="rgba(246,248,250,0.8)"/>
<text x="1177.18" y="524.30" font-size="11.5" fill="#26292d" font-weight="normal" textLength="40.03" lengthAdjust="spacingAndGlyphs" stroke="#26292d" stroke-width="0.3">$14.94K</text>
<rect x="1246.60" y="514.10" width="44.00" height="12.80" fill="rgba(246,248,250,0.8)"/>
<text x="1248.48" y="524.30" font-size="11.5" fill="#26292d" font-weight="normal" textLength="40.23" lengthAdjust="spacingAndGlyphs" stroke="#26292d" stroke-width="0.3">$11.89K</text>
<text x="747.30" y="475.40" font-size="11" fill="#359336" font-weight="normal" textLength="46.49" lengthAdjust="spacingAndGlyphs" stroke="#359336" stroke-width="0.35">$247.13K</text>
<text x="818.00" y="366.10" font-size="11" fill="#359336" font-weight="normal" textLength="46.89" lengthAdjust="spacingAndGlyphs" stroke="#359336" stroke-width="0.35">$962.64K</text>
<text x="888.90" y="400.90" font-size="11" fill="#359336" font-weight="normal" textLength="46.89" lengthAdjust="spacingAndGlyphs" stroke="#359336" stroke-width="0.35">$733.14K</text>
<text x="960.50" y="370.30" font-size="11" fill="#359336" font-weight="normal" textLength="46.49" lengthAdjust="spacingAndGlyphs" stroke="#359336" stroke-width="0.35">$939.09K</text>
<text x="1031.11" y="401.00" font-size="11" fill="#359336" font-weight="normal" textLength="46.99" lengthAdjust="spacingAndGlyphs" stroke="#359336" stroke-width="0.35">$733.13K</text>
<text x="1102.41" y="403.80" font-size="11" fill="#359336" font-weight="normal" textLength="46.59" lengthAdjust="spacingAndGlyphs" stroke="#359336" stroke-width="0.35">$711.84K</text>
<text x="1173.71" y="408.50" font-size="11" fill="#359336" font-weight="normal" textLength="46.29" lengthAdjust="spacingAndGlyphs" stroke="#359336" stroke-width="0.35">$685.78K</text>
<text x="1244.21" y="449.60" font-size="11" fill="#359336" font-weight="normal" textLength="46.99" lengthAdjust="spacingAndGlyphs" stroke="#359336" stroke-width="0.35">$412.44K</text>
</svg>
</body></html>
